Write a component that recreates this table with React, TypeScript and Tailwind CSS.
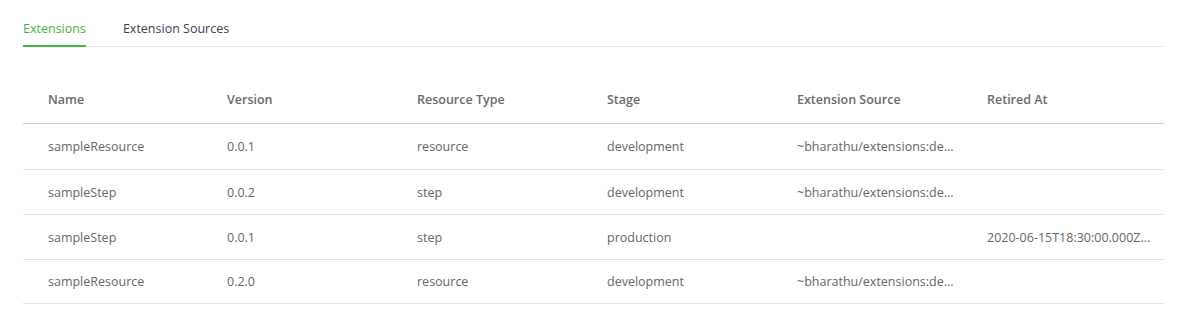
import React from "react";

const rows = [
  { name: "sampleResource", version: "0.0.1", type: "resource", stage: "development", source: "~bharathu/extensions:de...", retired: "" },
  { name: "sampleStep", version: "0.0.2", type: "step", stage: "development", source: "~bharathu/extensions:de...", retired: "" },
  { name: "sampleStep", version: "0.0.1", type: "step", stage: "production", source: "", retired: "2020-06-15T18:30:00.000Z..." },
  { name: "sampleResource", version: "0.2.0", type: "resource", stage: "development", source: "~bharathu/extensions:de...", retired: "" },
];

const cols = "grid grid-cols-[189px_190px_190px_190px_190px_192px]";

function Cell({ children, first, body }: { children?: React.ReactNode; first?: boolean; body?: boolean }) {
  return (
    <div className={`${first ? "pl-[25px]" : "pl-[15px]"} ${body ? "pt-[2px]" : ""} pr-[10px] flex items-center min-w-0 whitespace-nowrap`}>
      {children}
    </div>
  );
}

export default function App() {
  return (
    <div className="bg-white w-[1179px] h-[319px] pl-[23px] pr-[15px] pt-[20px] font-['Open_Sans',sans-serif] text-[12.5px]">
      {/* tabs */}
      <div className="flex border-b border-[#e6e6ea]">
        <div className="mr-[37px] border-b-2 border-[#44b94a] -mb-px pb-[7px] leading-[18px] text-[#4ab04a]">Extensions</div>
        <div className="pb-[7px] leading-[18px] text-[#3a3f51]">Extension Sources</div>
      </div>

      {/* table */}
      <div className="mt-[30px]">
        <div className={`${cols} h-[47px] border-b border-[#cccccc] text-[#6a6a6a] font-semibold`}>
          <Cell first>Name</Cell>
          <Cell>Version</Cell>
          <Cell>Resource Type</Cell>
          <Cell>Stage</Cell>
          <Cell>Extension Source</Cell>
          <Cell>Retired At</Cell>
        </div>
        {rows.map((r, i) => (
          <div key={i} className={`${cols} ${i === 0 ? "h-[46px]" : i === 3 ? "h-[44px]" : "h-[45px]"} border-b border-[#e2e2e2] text-[#666666]`}>
            <Cell first body>{r.name}</Cell>
            <Cell body>{r.version}</Cell>
            <Cell body>{r.type}</Cell>
            <Cell body>{r.stage}</Cell>
            <Cell body>{r.source}</Cell>
            <Cell body>{r.retired}</Cell>
          </div>
        ))}
      </div>
    </div>
  );
}
